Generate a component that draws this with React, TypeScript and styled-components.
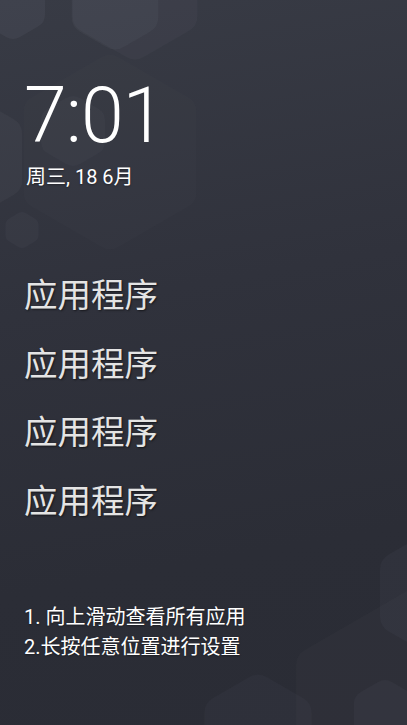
import React from "react";
import styled, { createGlobalStyle } from "styled-components";

const Global = createGlobalStyle`
  html, body { margin: 0; padding: 0; background: #2e3039; }
  body { font-family: "Noto Sans CJK SC", "Noto Sans", sans-serif; }
`;

const Screen = styled.div`
  position: relative;
  width: 407px;
  height: 725px;
  overflow: hidden;
  background: linear-gradient(170deg, #383b45 0%, #30323c 40%, #2b2d36 75%, #2a2c35 100%);
`;

const Wallpaper = styled.svg`
  position: absolute;
  inset: 0;
  width: 100%;
  height: 100%;
`;

const Content = styled.div`
  position: relative;
  display: flex;
  flex-direction: column;
  padding: 78px 0 0 24px;
`;

const Time = styled.div`
  font-family: Roboto, "Noto Sans", sans-serif;
  font-weight: 300;
  font-size: 77px;
  line-height: 1;
  color: #ffffff;
  letter-spacing: -1px;
`;

const DateLine = styled.div`
  margin: 10px 0 0 2px;
  font-family: Roboto, "Noto Sans CJK SC", sans-serif;
  font-size: 20px;
  line-height: 24px;
  color: #ffffff;
  text-shadow: 0 1px 2px rgba(0, 0, 0, 0.35);
`;

const AppList = styled.div`
  display: flex;
  flex-direction: column;
  gap: 24.7px;
  margin-top: 82px;
`;

const AppLabel = styled.div`
  font-family: "Noto Sans CJK SC", sans-serif;
  font-size: 33.5px;
  line-height: 44px;
  color: #e4e4e4;
  text-shadow: 1px 1px 2px rgba(0, 0, 0, 0.55);
`;

const Hints = styled.div`
  display: flex;
  flex-direction: column;
  margin-top: 81px;
`;

const Hint = styled.div`
  font-family: Roboto, "Noto Sans CJK SC", sans-serif;
  font-size: 20px;
  line-height: 30px;
  color: #ffffff;
  text-shadow: 0 1px 2px rgba(0, 0, 0, 0.35);
`;

function hexPath(cx: number, cy: number, r: number, rad: number): string {
  const pts: [number, number][] = [];
  for (let i = 0; i < 6; i++) {
    const a = (Math.PI / 180) * (-90 + 60 * i);
    pts.push([cx + r * Math.cos(a), cy + r * Math.sin(a)]);
  }
  let d = "";
  for (let i = 0; i < 6; i++) {
    const p = pts[i];
    const prev = pts[(i + 5) % 6];
    const next = pts[(i + 1) % 6];
    const t = rad / r;
    const a1: [number, number] = [p[0] + (prev[0] - p[0]) * t, p[1] + (prev[1] - p[1]) * t];
    const a2: [number, number] = [p[0] + (next[0] - p[0]) * t, p[1] + (next[1] - p[1]) * t];
    d += (i === 0 ? "M" : "L") + a1[0].toFixed(1) + " " + a1[1].toFixed(1);
    d += "Q" + p[0].toFixed(1) + " " + p[1].toFixed(1) + " " + a2[0].toFixed(1) + " " + a2[1].toFixed(1);
  }
  return d + "Z";
}

const hexes: { cx: number; cy: number; r: number; o: number }[] = [
  { cx: 13, cy: 4, r: 37, o: 0.055 },
  { cx: 115, cy: 2, r: 50, o: 0.045 },
  { cx: 135, cy: -10, r: 72, o: 0.035 },
  { cx: 110, cy: 152, r: 100, o: 0.015 },
  { cx: -35, cy: 157, r: 66, o: 0.045 },
  { cx: 73, cy: 131, r: 37, o: 0.03 },
  { cx: 22, cy: 230, r: 19, o: 0.035 },
  { cx: 438, cy: 593, r: 67, o: 0.035 },
  { cx: 426, cy: 730, r: 150, o: 0.025 },
  { cx: 258, cy: 734, r: 62, o: 0.03 },
  { cx: 385, cy: 714, r: 36, o: 0.035 },
];

const apps = ["应用程序", "应用程序", "应用程序", "应用程序"];

export default function App() {
  return (
    <Screen>
      <Global />
      <Wallpaper viewBox="0 0 407 725" aria-hidden>
        {hexes.map((h, i) => (
          <path key={i} d={hexPath(h.cx, h.cy, h.r, Math.min(10, h.r * 0.22))} fill={`rgba(200,205,220,${h.o})`} />
        ))}
      </Wallpaper>
      <Content>
        <Time>7:01</Time>
        <DateLine>周三, 18 6月</DateLine>
        <AppList>
          {apps.map((a, i) => (
            <AppLabel key={i}>{a}</AppLabel>
          ))}
        </AppList>
        <Hints>
          <Hint>1. 向上滑动查看所有应用</Hint>
          <Hint>2.长按任意位置进行设置</Hint>
        </Hints>
      </Content>
    </Screen>
  );
}
